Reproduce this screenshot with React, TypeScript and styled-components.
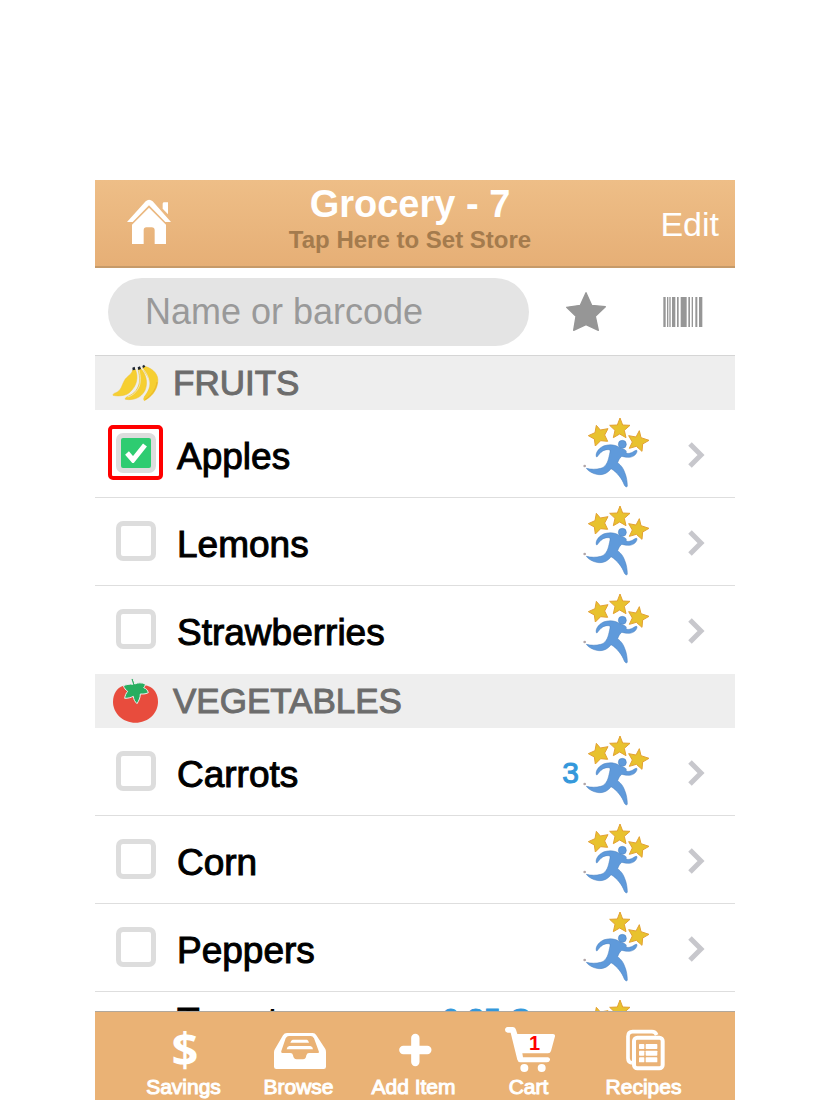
import React, { useState } from "react";
import styled, { createGlobalStyle } from "styled-components";

const GlobalStyle = createGlobalStyle`
  *, *::before, *::after { box-sizing: border-box; }
  body { margin: 0; background: #ffffff; }
  body, button, input { font-family: "Liberation Sans", Arial, sans-serif; }
`;

const Page = styled.div`
  height: 100vh;
  padding-top: 180px;
  display: flex;
  justify-content: center;
`;

const Phone = styled.main`
  width: 100%;
  max-width: 640px;
  display: flex;
  flex-direction: column;
  background: #ffffff;
`;

const PlainButton = styled.button`
  border: 0;
  padding: 0;
  background: none;
  color: inherit;
  cursor: pointer;
`;

const NavBar = styled.header`
  flex: none;
  height: 88px;
  display: grid;
  grid-template-columns: 120px 1fr 130px;
  align-items: center;
  background: linear-gradient(#eebe87, #e6af76);
  border-bottom: 2px solid #c69a69;
  color: #ffffff;
`;

const HomeButton = styled(PlainButton)`
  display: flex;
  justify-self: start;
  margin-left: 32px;
  padding-bottom: 2px;
`;

const TitleBlock = styled.div`
  align-self: start;
  display: flex;
  flex-direction: column;
  align-items: center;
  white-space: nowrap;
`;

const Title = styled.h1`
  margin: 0;
  font-size: 38px;
  line-height: 48px;
  font-weight: 700;
`;

const StoreButton = styled(PlainButton)`
  color: #a47b4d;
  font-size: 24px;
  line-height: 24px;
  font-weight: 700;
`;

const EditButton = styled(PlainButton)`
  justify-self: end;
  margin-right: 16px;
  padding-top: 2px;
  font-size: 34px;
  line-height: 40px;
`;

const SearchBar = styled.form`
  flex: none;
  height: 88px;
  display: flex;
  align-items: center;
  padding: 0 32px 0 13px;
  border-bottom: 1px solid #d5d5d5;
`;

const SearchInput = styled.input`
  flex: 1;
  min-width: 0;
  height: 68px;
  padding: 0 37px;
  border: 0;
  border-radius: 34px;
  background: #e4e4e4;
  color: #555555;
  font-size: 36px;
  outline: none;

  &::placeholder {
    color: #999999;
    opacity: 1;
  }
`;

const ToolButton = styled(PlainButton)<{ $gap: number }>`
  display: flex;
  margin-left: ${(p) => p.$gap}px;
`;

const List = styled.div`
  flex: 1;
  min-height: 0;
  overflow-y: auto;
  scrollbar-width: none;
`;

const SectionHeader = styled.h2`
  margin: 0;
  height: 54px;
  padding-left: 17px;
  display: flex;
  align-items: center;
  gap: 13px;
  background: #eeeeee;
  color: #6c6c6c;
  font-size: 35px;
  font-weight: 400;
  -webkit-text-stroke: 1px #6c6c6c;
`;

const Items = styled.ul`
  margin: 0;
  padding: 0;
  list-style: none;
`;

const Row = styled.li`
  height: 88px;
  display: flex;
  align-items: center;
  padding: 0 30px 2px 13px;
  border-bottom: 1px solid #dedede;

  &:last-child {
    border-bottom-color: transparent;
  }
`;

const ItemLabel = styled.label`
  flex: 1;
  display: flex;
  align-items: center;
  gap: 14px;
  cursor: pointer;
`;

const CheckCell = styled.span<{ $marked: boolean }>`
  display: grid;
  place-items: center;
  width: 55px;
  height: 55px;
  border: 4px solid ${(p) => (p.$marked ? "#ff0000" : "transparent")};
  border-radius: 5px;

  & > * {
    grid-area: 1 / 1;
  }
`;

const Checkbox = styled.input`
  appearance: none;
  width: 40px;
  height: 40px;
  margin: 0;
  border: 5px solid #dddddd;
  border-radius: 7px;
  background: #ffffff;

  &:checked {
    background: #2ecc71;
  }
`;

const CheckMark = styled.svg`
  pointer-events: none;
`;

const ItemName = styled.span<{ $raised: boolean }>`
  padding: ${(p) => (p.$raised ? "0 0 26px" : "8px 0 0")};
  color: #000000;
  font-size: 37px;
  line-height: 42px;
  -webkit-text-stroke: 1px #000000;
`;

const Quantity = styled.span<{ $raised: boolean }>`
  margin-right: 3px;
  padding: ${(p) => (p.$raised ? "0 0 32px" : "4px 0 0")};
  color: #3498db;
  font-size: 30px;
  line-height: 34px;
  -webkit-text-stroke: 1px #3498db;
`;

const DetailLink = styled.a`
  display: flex;
  margin-left: 38px;
  padding-top: 4px;
`;

const TabBar = styled.nav`
  flex: none;
  height: 89px;
  display: flex;
  padding: 14px 34px 0 31px;
  background: #eab275;
  border-top: 1px solid #b1a79b;
`;

const Tab = styled(PlainButton)`
  flex: 1;
  display: flex;
  flex-direction: column;
  align-items: center;
  gap: 3px;
  color: #ffffff;
  white-space: nowrap;
`;

const TabIcon = styled.span`
  height: 46px;
  display: flex;
  align-items: center;
  justify-content: center;
`;

const DollarSign = styled.span`
  padding-left: 3px;
  font-family: "Open Sans", sans-serif;
  font-size: 47px;
  line-height: 46px;
  font-weight: 700;
`;

const TabLabel = styled.span`
  font-size: 21px;
  line-height: 24px;
  -webkit-text-stroke: 1px #ffffff;
`;

const CartIcon = styled.span`
  display: grid;
  place-items: center;

  & > * {
    grid-area: 1 / 1;
  }
`;

const CartCount = styled.span`
  padding: 0 0 12px 12px;
  color: #ff0000;
  font-size: 20px;
  line-height: 20px;
  font-weight: 700;
`;

function Home() {
  return (
    <svg width="45" height="46" viewBox="96 72 135 138" fill="#fff" aria-hidden="true">
      <path d="M96 141 L152 79 Q162 70 173 79 L228 141 H211 L162 91 L113 141Z" />
      <path d="M111 149 L162 98 L213 149 V207 H179 V166 Q179 157 170 157 H154 Q146 157 146 166 V207 H111Z" />
      <path d="M203 86 Q203 82 208 82 H219 V118 L203 101Z" />
    </svg>
  );
}

function Star() {
  return (
    <svg width="42" height="42" viewBox="450 348 126 126" aria-hidden="true">
      <path
        d="M513 353 L530 391 L571 395 L541 424 L550 466 L513 449 L476 466 L483 424 L455 397 L496 391Z"
        fill="#969696"
        stroke="#969696"
        strokeWidth="4"
        strokeLinejoin="round"
      />
    </svg>
  );
}

const bars = [
  [744, 7], [755, 4], [762, 4], [770, 10], [785, 5], [796, 18],
  [819, 5], [829, 4], [840, 6], [851, 10],
];

function Barcode() {
  return (
    <svg width="40" height="30" viewBox="743 366 120 90" fill="#969696" aria-hidden="true">
      {bars.map(([x, w]) => (
        <rect key={x} x={x} y="366" width={w} height="90" />
      ))}
    </svg>
  );
}

function Bananas() {
  return (
    <svg width="48" height="38" viewBox="51 42 144 114" aria-hidden="true">
      <g fill="#f6cf31" stroke="#efc02f" strokeWidth="1.5" strokeLinejoin="round">
        <path d="M113 60 L121 58 C131 82 126 108 103 128 C90 139 66 139 54 136 C54 131 57 130 63 128 C80 120 79 108 88 92 C95 78 111 74 113 60Z" />
        <path d="M129 57 L136 55 C153 70 160 98 150 121 C139 143 116 152 91 148 C90 144 93 142 99 139 C120 130 129 117 133 97 C135 82 132 72 129 57Z" />
        <path d="M143 53 L149 49 C176 56 192 75 188 98 C185 122 169 141 148 152 C144 147 147 144 149 138 C158 125 165 115 164 99 C163 80 147 67 143 53Z" />
      </g>
      <path d="M132 60 C136 76 140 100 128 118 C122 128 112 137 98 141" fill="none" stroke="#eeeeee" strokeWidth="2" />
      <path d="M144 57 C156 70 166 90 161 110 C158 121 153 130 147 138" fill="none" stroke="#eeeeee" strokeWidth="2" />
      <path d="M186 96 C183 119 168 138 150 149" fill="none" stroke="#e9b52c" strokeWidth="3" />
      <g fill="#1d2430">
        <path d="M112 53 L119 50 L121 59 L113 61Z" />
        <path d="M128 52 L135 49 L138 57 L130 60Z" />
        <path d="M142 48 L147 44 L151 50 L144 54Z" />
      </g>
    </svg>
  );
}

function Tomato() {
  return (
    <svg width="48" height="46" viewBox="51 40 144 138" aria-hidden="true">
      <path
        d="M85 63 C65 69 54 89 54 111 C54 146 84 174 121 174 C159 174 189 146 189 111 C189 89 178 69 157 63 C144 61 97 60 85 63Z"
        fill="#e84c3d"
      />
      <path
        d="M109 43 L114 42 L119 58 C129 53 140 54 150 57 C151 61 150 65 146 69 C154 72 158 77 160 84 C150 89 143 88 136 88 C136 99 132 107 126 117 C119 110 116 105 115 95 C107 99 99 101 89 101 C90 93 93 86 98 80 C92 76 88 71 85 63 C94 60 103 57 115 59Z"
        fill="#27ae60"
        stroke="#eeeeee"
        strokeWidth="3"
        strokeLinejoin="round"
      />
      <path d="M111 43 L117 62" stroke="#27ae60" strokeWidth="3" />
    </svg>
  );
}

function Runner({ leftStar = true }: { leftStar?: boolean }) {
  return (
    <svg width="68" height="72" viewBox="66 36 204 216" aria-hidden="true">
      <g fill="#e8c22e" stroke="#e3a133" strokeWidth="3" strokeLinejoin="round">
        <path d="M180 39 L188 60 L210 61 L193 76 L198 98 L179 87 L160 98 L165 76 L149 61 L172 60Z" />
        <path d="M238 77 L243 98 L267 106 L248 117 L246 139 L229 124 L208 130 L217 111 L206 92 L228 96Z" />
        {leftStar && (
          <path d="M109 61 L121 75 L144 71 L134 90 L143 109 L122 107 L106 123 L103 102 L85 92 L105 83Z" />
        )}
      </g>
      <g fill="#5f9adb" stroke="#497fbd" strokeWidth="1.5">
        <path d="M109 155 C105 143 120 124 138 121 C154 117 170 121 179 128 C188 132 197 133 199 139 C194 147 210 148 222 139 C226 136 232 134 231 139 C229 151 216 158 203 157 C194 157 187 153 184 155 C178 160 176 166 173 173 C183 181 190 189 194 202 C200 216 202 231 202 244 C199 248 195 244 193 240 C186 222 173 203 153 191 C146 201 135 209 119 209 C104 209 86 200 79 190 C91 193 108 194 122 190 C137 186 143 173 147 155 C149 146 151 139 150 135 C137 131 124 138 115 151 C113 154 111 157 109 155Z" />
        <circle cx="187" cy="118" r="12" />
      </g>
      <circle cx="74" cy="183" r="4" fill="#b1a6a8" />
    </svg>
  );
}

function Chevron() {
  return (
    <svg width="17" height="28" viewBox="0 0 17 28" fill="none" aria-hidden="true">
      <path d="M2 3 L13 14 L2 25" stroke="#c7c7cc" strokeWidth="5" />
    </svg>
  );
}

function Tray() {
  return (
    <svg width="56" height="46" viewBox="531 153 168 138" aria-hidden="true">
      <path
        fill="#fff"
        fillRule="evenodd"
        d="M579 174 H656 Q663 174 667 181 L694 222 Q696 226 696 232 V275 Q696 282 689 282 H547 Q540 282 540 275 V232 Q540 226 543 222 L567 181 Q571 174 579 174Z M585 183 Q579 183 575 190 L562 228 Q560 234 567 234 H589 Q596 234 597 241 Q599 253 608 253 H627 Q636 253 637 241 Q639 234 645 234 H670 Q677 234 674 228 L660 190 Q656 183 650 183Z"
      />
      <g fill="#fff">
        <path d="M596 194 H639 Q643 195 645 203 H589 Q591 195 596 194Z" />
        <path d="M586 213 H649 Q656 214 657 223 H578 Q579 214 586 213Z" />
      </g>
    </svg>
  );
}

function Plus() {
  return (
    <svg width="56" height="46" viewBox="872 153 168 138" aria-hidden="true">
      <path d="M924 225 H996 M960 189 V261" stroke="#fff" strokeWidth="25" strokeLinecap="round" />
    </svg>
  );
}

function Cart() {
  return (
    <svg width="56" height="46" viewBox="258 153 168 138" aria-hidden="true">
      <g fill="#fff">
        <path d="M278 156 H294 Q301 156 303 164 L307 177 H414 Q421 177 420 184 L408 228 Q406 235 399 235 H322 L324 247 H399 Q406 248 405 255 Q403 262 396 262 H317 Q309 262 307 254 L287 173 H278 Q270 172 270 165 Q270 157 278 156Z" />
        <circle cx="328" cy="279" r="12" />
        <circle cx="380" cy="279" r="12" />
      </g>
    </svg>
  );
}

function Recipes() {
  return (
    <svg width="56" height="46" viewBox="602 153 168 138" aria-hidden="true">
      <path
        d="M650 264 Q638 262 638 250 V184 Q638 170 652 170 H710 Q720 170 724 180"
        fill="none"
        stroke="#fff"
        strokeWidth="11"
      />
      <rect x="656" y="188" width="86" height="92" rx="10" fill="none" stroke="#fff" strokeWidth="12" />
      <g fill="#fff">
        {[207, 227, 247].map((y) => (
          <React.Fragment key={y}>
            <rect x="671" y={y} width="16" height="15" rx="2" />
            <rect x="691" y={y} width="35" height="15" rx="2" />
          </React.Fragment>
        ))}
      </g>
    </svg>
  );
}

type Item = {
  name: string;
  quantity?: string;
  marked?: boolean;
  twoStars?: boolean;
  raised?: boolean;
};

const sections: { title: string; icon: React.ReactNode; items: Item[] }[] = [
  {
    title: "FRUITS",
    icon: <Bananas />,
    items: [{ name: "Apples", marked: true }, { name: "Lemons" }, { name: "Strawberries" }],
  },
  {
    title: "VEGETABLES",
    icon: <Tomato />,
    items: [
      { name: "Carrots", quantity: "3" },
      { name: "Corn" },
      { name: "Peppers", twoStars: true },
      { name: "Tomatoes", quantity: "0.25 Cans", raised: true },
    ],
  },
];

function ItemRow({ item }: { item: Item }) {
  const [checked, setChecked] = useState(Boolean(item.marked));
  const raised = Boolean(item.raised);
  return (
    <Row>
      <ItemLabel>
        <CheckCell $marked={Boolean(item.marked)}>
          <Checkbox type="checkbox" checked={checked} onChange={(e) => setChecked(e.target.checked)} />
          {checked && (
            <CheckMark width="24" height="20" viewBox="0 0 24 20" fill="none" aria-hidden="true">
              <path d="M3 10 L9 17 L21 2" stroke="#fff" strokeWidth="5" />
            </CheckMark>
          )}
        </CheckCell>
        <ItemName $raised={raised}>{item.name}</ItemName>
      </ItemLabel>
      {item.quantity && <Quantity $raised={raised}>{item.quantity}</Quantity>}
      <Runner leftStar={!item.twoStars} />
      <DetailLink href="#item" aria-label={item.name}>
        <Chevron />
      </DetailLink>
    </Row>
  );
}

const tabs: { label: string; icon: React.ReactNode }[] = [
  { label: "Savings", icon: <DollarSign aria-hidden="true">$</DollarSign> },
  { label: "Browse", icon: <Tray /> },
  { label: "Add Item", icon: <Plus /> },
  {
    label: "Cart",
    icon: (
      <CartIcon>
        <Cart />
        <CartCount>1</CartCount>
      </CartIcon>
    ),
  },
  { label: "Recipes", icon: <Recipes /> },
];

export default function App() {
  return (
    <>
      <GlobalStyle />
      <Page>
        <Phone>
          <NavBar>
            <HomeButton type="button" aria-label="Home">
              <Home />
            </HomeButton>
            <TitleBlock>
              <Title>Grocery - 7</Title>
              <StoreButton type="button">Tap Here to Set Store</StoreButton>
            </TitleBlock>
            <EditButton type="button">Edit</EditButton>
          </NavBar>
          <SearchBar onSubmit={(e) => e.preventDefault()}>
            <SearchInput type="text" placeholder="Name or barcode" aria-label="Name or barcode" />
            <ToolButton type="button" $gap={36} aria-label="Favorites">
              <Star />
            </ToolButton>
            <ToolButton type="button" $gap={56} aria-label="Scan">
              <Barcode />
            </ToolButton>
          </SearchBar>
          <List>
            {sections.map((section) => (
              <section key={section.title}>
                <SectionHeader>
                  {section.icon}
                  {section.title}
                </SectionHeader>
                <Items>
                  {section.items.map((item) => (
                    <ItemRow key={item.name} item={item} />
                  ))}
                </Items>
              </section>
            ))}
          </List>
          <TabBar>
            {tabs.map((tab) => (
              <Tab key={tab.label} type="button">
                <TabIcon>{tab.icon}</TabIcon>
                <TabLabel>{tab.label}</TabLabel>
              </Tab>
            ))}
          </TabBar>
        </Phone>
      </Page>
    </>
  );
}
